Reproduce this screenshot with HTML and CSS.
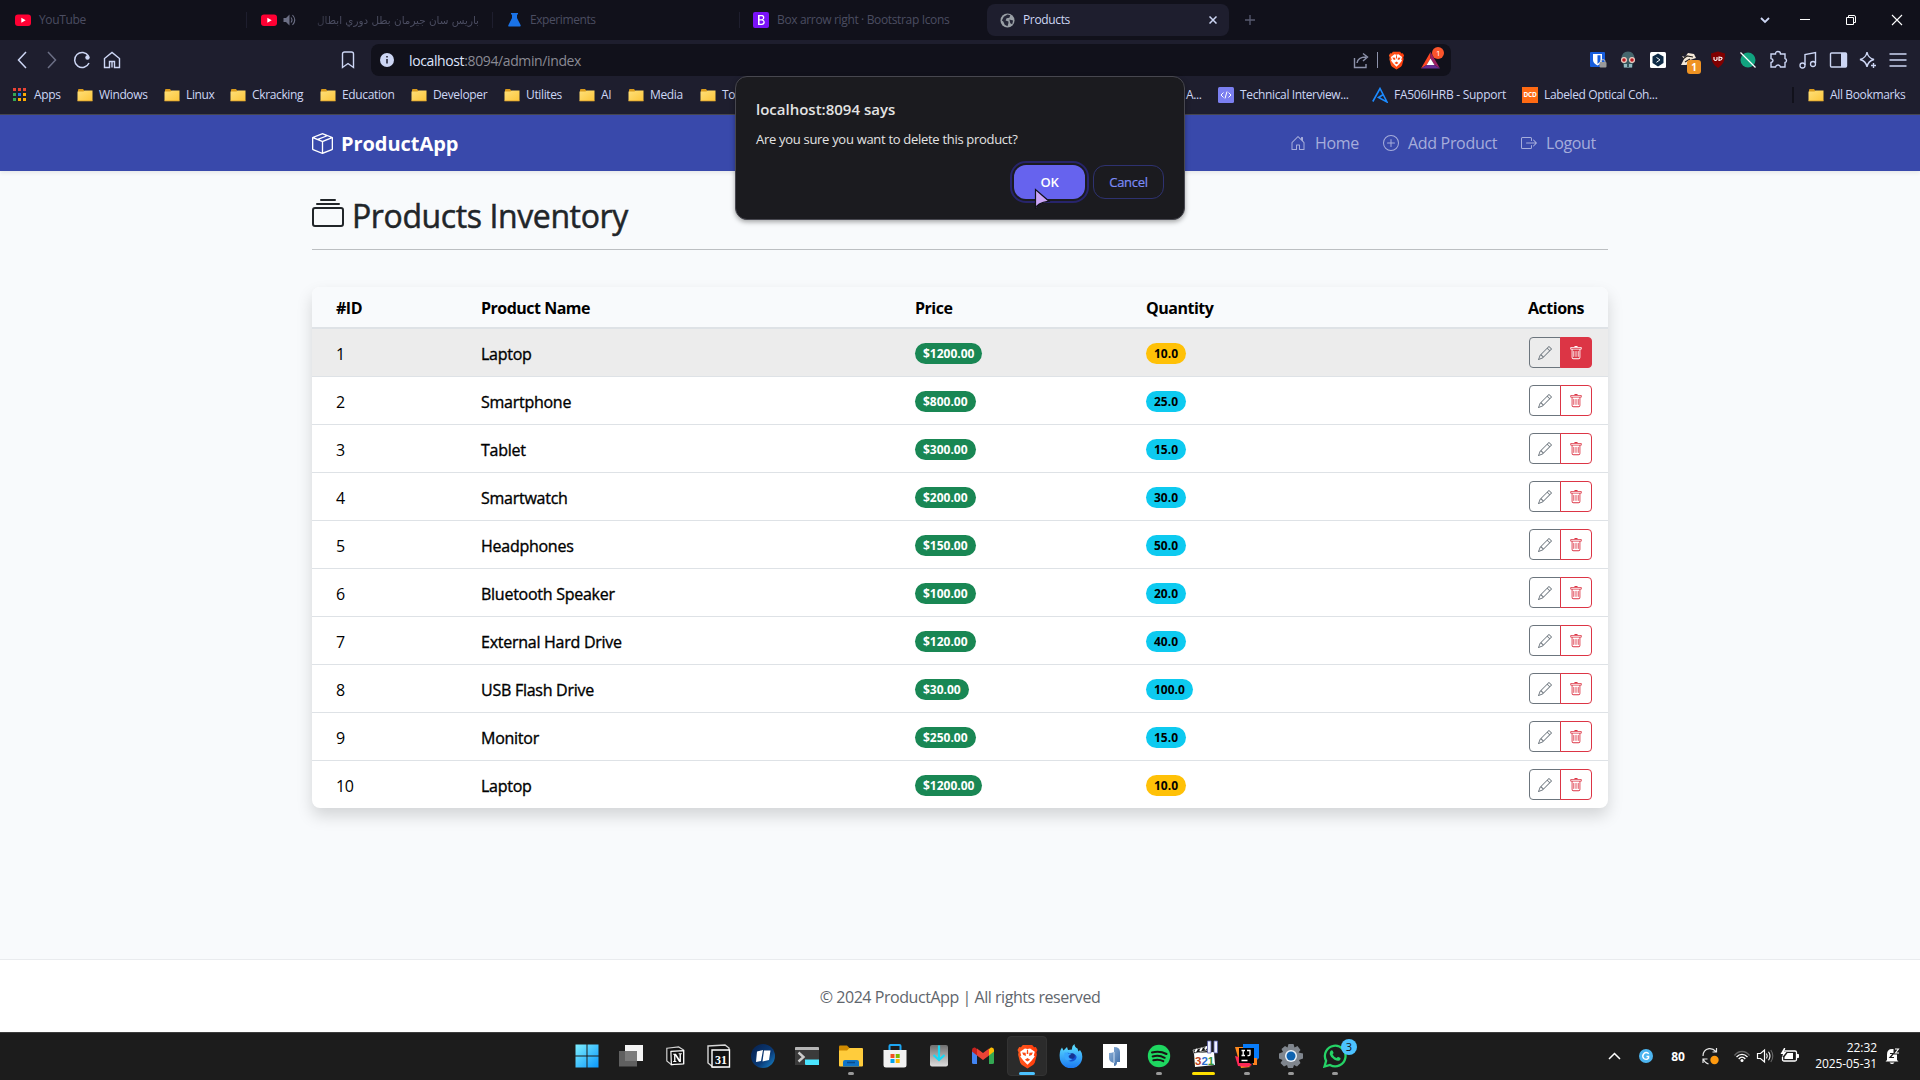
FILE: index.html
```html
<!DOCTYPE html>
<html lang="en">
<head>
<meta charset="utf-8">
<title>Products</title>
<link rel="stylesheet" href="styles.css">
</head>
<body>
<svg class="defs" width="0" height="0">
  <defs>
    <linearGradient id="gFolder" x1="0" y1="0" x2="1" y2="1"><stop offset="0" stop-color="#ffe07a"/><stop offset="1" stop-color="#fcc63a"/></linearGradient>
    <linearGradient id="gWin" x1="0" y1="0" x2="1" y2="1"><stop offset="0" stop-color="#7eefff"/><stop offset="1" stop-color="#0a97fb"/></linearGradient>
    <linearGradient id="gBrave" x1="0" y1="0" x2="1" y2="0"><stop offset="0" stop-color="#ff5a1f"/><stop offset="1" stop-color="#ff3a0a"/></linearGradient>
    <linearGradient id="gFox" x1="0" y1="0" x2="0" y2="1"><stop offset="0" stop-color="#5fe3ff"/><stop offset="1" stop-color="#1a78f2"/></linearGradient>
    <linearGradient id="gGray" x1="0" y1="0" x2="0" y2="1"><stop offset="0" stop-color="#707070"/><stop offset="1" stop-color="#dedede"/></linearGradient>
    <linearGradient id="gPhys" x1="0" y1="0" x2="1" y2="1"><stop offset="0" stop-color="#90b4dc"/><stop offset="1" stop-color="#3c6ba5"/></linearGradient>
    <linearGradient id="gOrb" x1="0" y1="0" x2="1" y2="1"><stop offset="0" stop-color="#07204c"/><stop offset=".6" stop-color="#0a3b78"/><stop offset="1" stop-color="#1a8bd0"/></linearGradient>
    <symbol id="folder" viewBox="0 0 16 16"><path d="M1 3a1 1 0 0 1 1-1h4l1.500 2H15v9H1z" fill="#d99a1c"/><path d="M.5 4.500h6L7.500 3.500H15.500V14H.5z" fill="url(#gFolder)"/><path d="M.5 13.500h15v.8H.5z" fill="#e0a32a"/></symbol>
    <symbol id="youtube" viewBox="0 0 16 16"><rect y="2.500" width="16" height="11.500" rx="3" fill="#ff0033"/><path d="M6.300 5.700v5l4.400-2.500z" fill="#fff"/></symbol>
    <symbol id="pencil" viewBox="0 0 16 16"><path d="M12.146.146a.5.5 0 0 1 .708 0l3 3a.5.5 0 0 1 0 .708l-10 10a.5.5 0 0 1-.168.11l-5 2a.5.5 0 0 1-.65-.65l2-5a.5.5 0 0 1 .11-.168zM11.207 2.5 13.500 4.793 14.793 3.500 12.500 1.207zm1.586 3L10.500 3.207 4 9.707V10h.5a.5.5 0 0 1 .5.5v.5h.5a.5.5 0 0 1 .5.5v.5h.293zm-9.761 5.175-.106.106-1.528 3.821 3.821-1.528.106-.106A.5.5 0 0 1 5 12.500V12h-.5a.5.5 0 0 1-.5-.5V11h-.5a.5.5 0 0 1-.468-.325"/></symbol>
    <symbol id="trash" viewBox="0 0 16 16"><path d="M5.500 5.500A.5.5 0 0 1 6 6v6a.5.5 0 0 1-1 0V6a.5.5 0 0 1 .5-.5m2.500 0a.5.5 0 0 1 .5.5v6a.5.5 0 0 1-1 0V6a.5.5 0 0 1 .5-.5m3 .5a.5.5 0 0 0-1 0v6a.5.5 0 0 0 1 0z"/><path d="M14.500 3a1 1 0 0 1-1 1H13v9a2 2 0 0 1-2 2H5a2 2 0 0 1-2-2V4h-.5a1 1 0 0 1-1-1V2a1 1 0 0 1 1-1H6a1 1 0 0 1 1-1h2a1 1 0 0 1 1 1h3.500a1 1 0 0 1 1 1zM4.118 4 4 4.059V13a1 1 0 0 0 1 1h6a1 1 0 0 0 1-1V4.059L11.882 4zM2.500 3h11V2h-11z"/></symbol>
    <symbol id="brave" viewBox="0 0 20 24"><path d="M5.500 1h9l1.800 2 1.700-.2 1.600 3-1 2 .4 2.500-2 7.700-1.400 2L10 23.500 4.400 20 3 18 1 10.300l.4-2.500-1-2 1.600-3 1.700.2z" fill="url(#gBrave)"/><path d="M10 4.800l2.500-.6L17 7.500l-1 3.500 1 1-3.200 4L10 19.800 6.200 16 3 12l1-1-1-3.500 4.500-3.300z" fill="#fff"/><path d="M4.800 8.200l3.400.3.300 3L6 10.600zM15.200 8.200l-3.400.3-.3 3 2.500-.9zM7.500 15l2.500-1.600 2.500 1.600L10 16.800zM9.500 5.500h1l.3 4h-1.600z" fill="#fb4a14"/></symbol>
  </defs>
</svg>

<header class="browser">
  <div class="tabs">
    <div class="tab"><svg width="16" height="16"><use href="#youtube"/></svg><span>YouTube</span></div>
    <div class="tab tab-audio"><svg width="16" height="16"><use href="#youtube"/></svg><svg class="speaker" width="13" height="14" viewBox="0 0 13 14"><path d="M.5 5h2.500l3.500-3.500v11L3 9H.5z" fill="#6c6f85"/><path d="M8 4.500q2 2.500 0 5M9.500 2q4.500 5 0 10" fill="none" stroke="#6c6f85" stroke-width="1.100"/></svg><span class="arabic" dir="rtl" lang="ar">باريس سان جيرمان بطل دوري ابطال</span></div>
    <div class="tab tab-flask"><svg width="13" height="14" viewBox="0 0 13 14"><path d="M3 0h7v1.500H9V5l3.700 7.200q.3 1.300-1 1.300H1.300q-1.300 0-1-1.300L4 5V1.500H3z" fill="#1a73e8"/></svg><span>Experiments</span></div>
    <div class="tab"><svg width="16" height="16" viewBox="0 0 16 16"><rect width="16" height="16" rx="2" fill="#7a12f8"/><path d="M5 3h3.700c3.300 0 3.300 4 1 4.700 3 .6 2.800 5.300-1 5.300H5zm1.600 1.300v2.900h1.900c2 0 2-2.900 0-2.900zm0 4.200v3.200h2.100c2.300 0 2.300-3.200 0-3.200z" fill="#fff"/></svg><span>Box arrow right · Bootstrap Icons</span></div>
    <div class="tab active"><svg width="15" height="15" viewBox="0 0 16 16"><circle cx="8" cy="8" r="7.500" fill="#9aa0a6"/><path d="M8 1.500l3 1-1 2.500-3 .5L6 8l3 1v2l-1 3-3-1.500L3.500 9 2 8l2-4zM10 7l4 1-1 4-2-1z" fill="#262738"/></svg><span>Products</span><svg class="close" width="8" height="8" viewBox="0 0 8 8"><path d="M.5.5l7 7M7.500.5l-7 7" stroke="#cdd6f4" stroke-width="1.500"/></svg></div>
    <svg class="newtab" width="10" height="10" viewBox="0 0 10 10"><path d="M5 0v10M0 5h10" stroke="#585b70" stroke-width="1.300"/></svg>
    <div class="wincontrols">
      <svg class="w-chev" width="10" height="7" viewBox="0 0 10 7"><path d="M1 1l4 4 4-4" fill="none" stroke="#cdd6f4" stroke-width="1.800"/></svg>
      <svg width="46" height="12" viewBox="0 0 46 12"><path d="M18 5.500h10" stroke="#fff"/></svg>
      <svg width="46" height="12" viewBox="0 0 46 12"><path d="M18.500 3.500h7v7h-7zM20.500 3V1.500h5.500q1.500 0 1.500 1.500v5.500H26" fill="none" stroke="#fff"/></svg>
      <svg width="46" height="12" viewBox="0 0 46 12"><path d="M18 1l10 10M28 1L18 11" stroke="#fff" stroke-width="1.100"/></svg>
    </div>
  </div>

  <div class="toolbar">
    <div class="navbtns">
      <svg viewBox="0 0 30 20"><path d="M20 2l-7.500 8 7.500 8" fill="none" stroke="#cdd6f4" stroke-width="1.500"/></svg>
      <svg viewBox="0 0 30 20"><path d="M12 2l7.500 8-7.500 8" fill="none" stroke="#6c6f85" stroke-width="1.500"/></svg>
      <svg viewBox="0 0 30 20"><path d="M22.500 6a7.500 7.500 0 1 0 .5 7" fill="none" stroke="#cdd6f4" stroke-width="1.500"/><circle cx="21.500" cy="7.500" r="2.200" fill="#cdd6f4"/></svg>
      <svg viewBox="0 0 30 20"><path d="M8.500 17.500v-9L16 2.500l7.500 6v9h-5v-6h-5v6zM16 12v5.500" fill="none" stroke="#cdd6f4" stroke-width="1.400"/></svg>
    </div>
    <svg class="bm" width="14" height="18" viewBox="0 0 14 18"><path d="M1.500 3a2 2 0 0 1 2-2h7a2 2 0 0 1 2 2v13.500L7 12.500l-5.500 4z" fill="none" stroke="#cdd6f4" stroke-width="1.400"/></svg>
    <div class="urlbar">
      <svg width="14" height="14" viewBox="0 0 14 14"><circle cx="7" cy="7" r="7" fill="#cdd6f4"/><path d="M7 6v4.500M7 3v1.600" stroke="#313244" stroke-width="1.700"/></svg>
      <span class="url"><b>localhost</b>:8094/admin/index</span>
      <svg class="share" width="17" height="17" viewBox="0 0 17 17"><path d="M1.500 6v9.500h11.500V12M4 11q1-6 9-6M10 1.500L14.500 5 10 9" fill="none" stroke="#8d92ab" stroke-width="1.400"/></svg>
      <i class="vline"></i>
      <svg class="shield" width="17" height="19"><use href="#brave"/></svg>
      <span class="bat"><svg width="19" height="17" viewBox="0 0 19 17"><path d="M9.500 0L0 16.500l5.500-3.500 4-6.500z" fill="#ff4724"/><path d="M9.500 0L19 16.500 13.500 13 9.500 6.500z" fill="#9e1f63"/><path d="M0 16.500h19L13.500 13h-8z" fill="#662d91"/><path d="M9.500 6.500l4 6.500h-8z" fill="#fff"/></svg><em>1</em></span>
    </div>
    <div class="exts">
      <svg viewBox="0 0 30 20"><rect x="7" y="2" width="15" height="15" rx="1" fill="#175ddc"/><path d="M10 4h9v6q0 3-4.500 5.500Q10 13 10 10z" fill="#fff"/><path d="M14.500 5.300H17.500V10q0 2-3 4z" fill="#175ddc"/><rect x="16.500" y="12" width="7" height="5.500" rx="1" fill="#9a9a9a"/><path d="M18 12v-1.500q2-2 4 0V12" fill="none" stroke="#bbb"/></svg>
      <svg viewBox="0 0 30 20"><path d="M8.500 9q0-7.500 6.500-7.500t6.500 7.500v3h-13z" fill="#45666c"/><path d="M9.500 11h11l-1 6.500h-9z" fill="#37565c"/><path d="M11 14h8v3.500h-8z" fill="#93b7bf"/><path d="M15 12v5" stroke="#37565c" stroke-width="2"/><circle cx="11" cy="10" r="3" fill="#efd0c4"/><circle cx="19" cy="10" r="3" fill="#efd0c4"/><circle cx="11" cy="10" r="1.800" fill="#b91d23"/><circle cx="19" cy="10" r="1.800" fill="#b91d23"/></svg>
      <svg viewBox="0 0 30 20"><rect x="7" y="2" width="16" height="16" rx="1.500" fill="#fff"/><path d="M15 3.500l5.500 3v6.500L15 16.500 9.500 13V6.500z" fill="#0f2b46"/><path d="M13.500 7.500l3.500 2.300-3.500 2.500" fill="none" stroke="#fff"/></svg>
      <span class="extbadge"><svg viewBox="0 0 30 20"><path d="M8 15l3-6-2-3 3 1 3-4 6 1 2 4-6 2-1 4-3 1z" fill="#f4e8d8"/><path d="M10 9l4-3 6 1M12 12l5-3M8 5l3-2" fill="none" stroke="#25211f" stroke-width="1.200"/></svg><em>1</em></span>
      <svg viewBox="0 0 30 20"><path d="M15 1.500l7 2q.5 10-7 14.500-7.500-4.500-7-14.500z" fill="#800000"/><path d="M11 7v2.500q1.500 2 3 0V7M16 7q3.500 0 3 1.700t-3 1.800z" fill="none" stroke="#fff" stroke-width="1.100"/></svg>
      <svg viewBox="0 0 30 20"><circle cx="15" cy="10" r="7.500" fill="#11a37f"/><path d="M7.500 2.500l15 15" stroke="#fff" stroke-width="1.300"/></svg>
      <svg viewBox="0 0 30 20"><path d="M8 4h4.500q0-2.500 2.500-2.500T17.500 4H22v4.500q1.500.3 1.500 2T22 12.500V17h-4.500q-.5-2-2.500-2t-2.500 2H8v-4.500q2-.5 2-2T8 8.500z" fill="none" stroke="#cdd6f4" stroke-width="1.400"/></svg>
      <svg viewBox="0 0 30 20"><path d="M12 15V4.500l10.500-2V13" fill="none" stroke="#cdd6f4" stroke-width="1.400"/><circle cx="9.500" cy="15.500" r="2.500" fill="none" stroke="#cdd6f4" stroke-width="1.300"/><circle cx="20" cy="14" r="2.500" fill="none" stroke="#cdd6f4" stroke-width="1.300"/></svg>
      <svg viewBox="0 0 30 20"><rect x="7.500" y="3" width="16" height="14" rx="1" fill="none" stroke="#cdd6f4" stroke-width="1.400"/><path d="M18 3h5v14h-5z" fill="#cdd6f4"/></svg>
      <svg viewBox="0 0 30 20"><path d="M14 2q1 6 7 7.500-6 1.500-7 7.500-1-6-7-7.500Q13 8 14 2zM20.500 13v5M18 15.500h5" fill="none" stroke="#cdd6f4" stroke-width="1.400"/></svg>
      <svg viewBox="0 0 30 20"><path d="M6.500 4h17M6.500 10h17M6.500 16h17" stroke="#cdd6f4" stroke-width="1.500"/></svg>
    </div>
  </div>

  <div class="bookmarks">
    <div class="mark"><svg class="apps" width="13" height="13" viewBox="0 0 13 13"><path d="M0 0h3v3H0zM5 0h3v3H5zM10 0h3v3h-3z" fill="#ea4335"/><path d="M0 5h3v3H0zM0 10h3v3H0z" fill="#34a853"/><path d="M5 5h3v3H5z" fill="#1a73e8"/><path d="M10 5h3v3h-3zM5 10h3v3H5zM10 10h3v3h-3z" fill="#fbab05"/></svg>Apps</div>
    <div class="mark"><svg width="16" height="16"><use href="#folder"/></svg>Windows</div>
    <div class="mark"><svg width="16" height="16"><use href="#folder"/></svg>Linux</div>
    <div class="mark"><svg width="16" height="16"><use href="#folder"/></svg>Ckracking</div>
    <div class="mark"><svg width="16" height="16"><use href="#folder"/></svg>Education</div>
    <div class="mark"><svg width="16" height="16"><use href="#folder"/></svg>Developer</div>
    <div class="mark"><svg width="16" height="16"><use href="#folder"/></svg>Utilites</div>
    <div class="mark"><svg width="16" height="16"><use href="#folder"/></svg>AI</div>
    <div class="mark"><svg width="16" height="16"><use href="#folder"/></svg>Media</div>
    <div class="mark"><svg width="16" height="16"><use href="#folder"/></svg>To</div>
    <div class="mark">A...</div>
    <div class="mark"><svg width="16" height="16" viewBox="0 0 16 16"><rect width="16" height="16" rx="1.500" fill="#7b7ff0"/><path d="M5.500 5.500L3 8l2.500 2.500M10.500 5.500L13 8l-2.500 2.500M9 4.500l-2 7" fill="none" stroke="#fff"/></svg>Technical Interview...</div>
    <div class="mark"><svg width="16" height="16" viewBox="0 0 16 16"><path d="M.8 14.500L8 1.500l7 13.500-8.500-4.500L10.500 8" fill="none" stroke="#1c8bff" stroke-width="1.600"/></svg><span class="asus">FA506IHRB - Support</span></div>
    <div class="mark"><i class="dcd">DCD</i>Labeled Optical Coh...</div>
    <div class="mark all"><svg width="16" height="16"><use href="#folder"/></svg>All Bookmarks</div>
  </div>
</header>

<main class="page">
  <nav class="navbar">
    <div class="container">
      <a class="brand"><svg width="21" height="21" viewBox="0 0 16 16" fill="currentColor"><path d="M8.186 1.113a.5.5 0 0 0-.372 0L1.846 3.500l2.404.961L10.404 2zm3.564 1.426L5.596 5 8 5.961 14.154 3.500zm3.250 1.700-6.500 2.600v7.922l6.500-2.600V4.240zM7.500 14.762V6.838L1 4.239v7.923zM7.443.184a1.500 1.500 0 0 1 1.114 0l7.129 2.852A.5.5 0 0 1 16 3.500v8.662a1 1 0 0 1-.629.928l-7.185 2.874a.5.5 0 0 1-.372 0L.63 13.090a1 1 0 0 1-.63-.928V3.500a.5.5 0 0 1 .314-.464z"/></svg><span>ProductApp</span></a>
      <div class="links">
        <a><svg width="16" height="16" viewBox="0 0 16 16" fill="currentColor"><path d="M8.354 1.146a.5.5 0 0 0-.708 0l-6 6A.5.5 0 0 0 1.500 7.500v7a.5.5 0 0 0 .5.5h4.500a.5.5 0 0 0 .5-.5v-4h2v4a.5.5 0 0 0 .5.5H14a.5.5 0 0 0 .5-.5v-7a.5.5 0 0 0-.146-.354L13 5.793V2.500a.5.5 0 0 0-.5-.5h-1a.5.5 0 0 0-.5.5v1.293zM2.500 14V7.707l5.500-5.500 5.500 5.500V14H10v-4a.5.5 0 0 0-.5-.5h-3a.5.5 0 0 0-.5.5v4z"/></svg><span>Home</span></a>
        <a><svg width="16" height="16" viewBox="0 0 16 16" fill="currentColor"><path d="M8 15A7 7 0 1 1 8 1a7 7 0 0 1 0 14m0 1A8 8 0 1 0 8 0a8 8 0 0 0 0 16"/><path d="M8 4a.5.5 0 0 1 .5.5v3h3a.5.5 0 0 1 0 1h-3v3a.5.5 0 0 1-1 0v-3h-3a.5.5 0 0 1 0-1h3v-3A.5.5 0 0 1 8 4"/></svg><span>Add Product</span></a>
        <a><svg width="16" height="16" viewBox="0 0 16 16" fill="currentColor"><path d="M10 12.500a.5.5 0 0 1-.5.5h-8a.5.5 0 0 1-.5-.5v-9a.5.5 0 0 1 .5-.5h8a.5.5 0 0 1 .5.5v2a.5.5 0 0 0 1 0v-2A1.500 1.500 0 0 0 9.500 2h-8A1.500 1.500 0 0 0 0 3.500v9A1.500 1.500 0 0 0 1.500 14h8a1.500 1.500 0 0 0 1.500-1.500v-2a.5.5 0 0 0-1 0z"/><path d="M15.854 8.354a.5.5 0 0 0 0-.708l-3-3a.5.5 0 0 0-.708.708L14.293 7.500H5.500a.5.5 0 0 0 0 1h8.793l-2.147 2.146a.5.5 0 0 0 .708.708z"/></svg><span>Logout</span></a>
      </div>
    </div>
  </nav>

  <section class="content">
    <h2><svg width="32" height="32" viewBox="0 0 16 16" fill="currentColor"><path d="M2.500 3.500a.5.5 0 0 1 0-1h11a.5.5 0 0 1 0 1zm2-2a.5.5 0 0 1 0-1h7a.5.5 0 0 1 0 1zM0 13a1.500 1.500 0 0 0 1.500 1.500h13A1.500 1.500 0 0 0 16 13V6a1.500 1.500 0 0 0-1.500-1.500h-13A1.500 1.500 0 0 0 0 6zm1.500.5A.5.5 0 0 1 1 13V6a.5.5 0 0 1 .5-.5h13a.5.5 0 0 1 .5.5v7a.5.5 0 0 1-.5.5z"/></svg><span>Products Inventory</span></h2>
    <hr>
    <div class="card">
      <table>
        <colgroup><col class="c-id"><col class="c-name"><col class="c-price"><col class="c-qty"><col></colgroup>
        <thead><tr><th>#ID</th><th>Product Name</th><th>Price</th><th>Quantity</th><th class="act">Actions</th></tr></thead>
        <tbody>
          <tr class="hover"><td>1</td><td class="name">Laptop</td><td><span class="badge green">$1200.00</span></td><td><span class="badge yellow">10.0</span></td><td class="act"><div class="group"><a class="edit"><svg width="14" height="14"><use href="#pencil"/></svg></a><a class="del on"><svg width="14" height="14"><use href="#trash"/></svg></a></div></td></tr>
          <tr><td>2</td><td class="name">Smartphone</td><td><span class="badge green">$800.00</span></td><td><span class="badge cyan">25.0</span></td><td class="act"><div class="group"><a class="edit"><svg width="14" height="14"><use href="#pencil"/></svg></a><a class="del"><svg width="14" height="14"><use href="#trash"/></svg></a></div></td></tr>
          <tr><td>3</td><td class="name">Tablet</td><td><span class="badge green">$300.00</span></td><td><span class="badge cyan">15.0</span></td><td class="act"><div class="group"><a class="edit"><svg width="14" height="14"><use href="#pencil"/></svg></a><a class="del"><svg width="14" height="14"><use href="#trash"/></svg></a></div></td></tr>
          <tr><td>4</td><td class="name">Smartwatch</td><td><span class="badge green">$200.00</span></td><td><span class="badge cyan">30.0</span></td><td class="act"><div class="group"><a class="edit"><svg width="14" height="14"><use href="#pencil"/></svg></a><a class="del"><svg width="14" height="14"><use href="#trash"/></svg></a></div></td></tr>
          <tr><td>5</td><td class="name">Headphones</td><td><span class="badge green">$150.00</span></td><td><span class="badge cyan">50.0</span></td><td class="act"><div class="group"><a class="edit"><svg width="14" height="14"><use href="#pencil"/></svg></a><a class="del"><svg width="14" height="14"><use href="#trash"/></svg></a></div></td></tr>
          <tr><td>6</td><td class="name">Bluetooth Speaker</td><td><span class="badge green">$100.00</span></td><td><span class="badge cyan">20.0</span></td><td class="act"><div class="group"><a class="edit"><svg width="14" height="14"><use href="#pencil"/></svg></a><a class="del"><svg width="14" height="14"><use href="#trash"/></svg></a></div></td></tr>
          <tr><td>7</td><td class="name">External Hard Drive</td><td><span class="badge green">$120.00</span></td><td><span class="badge cyan">40.0</span></td><td class="act"><div class="group"><a class="edit"><svg width="14" height="14"><use href="#pencil"/></svg></a><a class="del"><svg width="14" height="14"><use href="#trash"/></svg></a></div></td></tr>
          <tr><td>8</td><td class="name">USB Flash Drive</td><td><span class="badge green">$30.00</span></td><td><span class="badge cyan">100.0</span></td><td class="act"><div class="group"><a class="edit"><svg width="14" height="14"><use href="#pencil"/></svg></a><a class="del"><svg width="14" height="14"><use href="#trash"/></svg></a></div></td></tr>
          <tr><td>9</td><td class="name">Monitor</td><td><span class="badge green">$250.00</span></td><td><span class="badge cyan">15.0</span></td><td class="act"><div class="group"><a class="edit"><svg width="14" height="14"><use href="#pencil"/></svg></a><a class="del"><svg width="14" height="14"><use href="#trash"/></svg></a></div></td></tr>
          <tr><td>10</td><td class="name">Laptop</td><td><span class="badge green">$1200.00</span></td><td><span class="badge yellow">10.0</span></td><td class="act"><div class="group"><a class="edit"><svg width="14" height="14"><use href="#pencil"/></svg></a><a class="del"><svg width="14" height="14"><use href="#trash"/></svg></a></div></td></tr>
        </tbody>
      </table>
    </div>
  </section>
  <footer>© 2024 ProductApp | All rights reserved</footer>
</main>

<div class="dialog">
  <div class="d-title">localhost:8094 says</div>
  <div class="d-text">Are you sure you want to delete this product?</div>
  <div class="d-buttons"><span class="ok">OK</span><span class="cancel">Cancel</span></div>
</div>
<svg class="cursor" width="17" height="23" viewBox="0 0 17 23"><path d="M1.500 1.500v19.500q1-6 13.500-7.800z" fill="#cba6f7" stroke="#11111b" stroke-width="1.200"/></svg>

<div class="taskbar">
  <div class="apps-row">
    <span class="app"><svg width="24" height="24" viewBox="0 0 24 24"><path d="M.5.500h11v11H.5zM12.500.5h11v11h-11zM.5 12.500h11v11H.5zM12.500 12.500h11v11h-11z" fill="url(#gWin)"/></svg></span>
    <span class="app"><svg width="24" height="24" viewBox="0 0 24 24"><path d="M6 1h18v16H6z" fill="#f4f4f4"/><path d="M0 7h18v15.500H0z" fill="#6a6a6a" opacity=".88"/></svg></span>
    <span class="app"><svg width="20" height="20" viewBox="1 1 22 22"><path d="M3 3.500l13-1.500 5.500 3.500v15L8 21.500l-5-4z" fill="#111" stroke="#d5d5d5" stroke-width="1.300"/><path d="M7.500 7l14-1v14.500L8 21.500z" fill="#111" stroke="#fff" stroke-width="1.300"/><path d="M10 9.500h3l4 6V10h-1V9h3.500v1h-1v8.500h-2l-4-6.500v5.500h1v1H10v-1h1v-7h-1z" fill="#fff"/></svg></span>
    <span class="app"><svg width="24" height="24" viewBox="0 0 24 24"><path d="M1 2l17-1 4 3v18L6 23l-5-4z" fill="#111" stroke="#d5d5d5" stroke-width="1.400"/><path d="M5 6h17.500v17H5z" fill="#111" stroke="#fff" stroke-width="1.400"/><text x="13.900" y="19.500" class="cal">31</text></svg></span>
    <span class="app"><svg width="24" height="24" viewBox="0 0 24 24"><circle cx="12" cy="12" r="12" fill="url(#gOrb)"/><path d="M6 7.500l6-1.500-2 11-5 1zM13 6.500h6.500L18 16l-6.500 1.500z" fill="#fff"/></svg></span>
    <span class="app"><svg width="24" height="24" viewBox="0 0 24 24"><path d="M0 4q0-1 1-1h22q1 0 1 1v17H0z" fill="#3b3b3b"/><path d="M0 4q0-1 1-1h22q1 0 1 1v2H0z" fill="#b5b5b5"/><path d="M3.500 8.500l5 4.500-5 4.500" fill="none" stroke="#ccc" stroke-width="2.400"/><path d="M10 15.500h14V21H11q-1 0-1-1z" fill="#4be5ff"/></svg></span>
    <span class="app"><svg width="24" height="24" viewBox="0 0 24 24"><path d="M0 2.500q0-1 1-1h7l2.500 2.500V7H0z" fill="#d08a00"/><path d="M0 6.500h8L10.500 4H23q1 0 1 1v16.500q0 1-1 1H1q-1 0-1-1z" fill="#ffcc3c"/><path d="M4 22.500V18q0-2 2-2h12q2 0 2 2v4.500z" fill="#0f74c7"/><path d="M8 18.500h8" stroke="#0a4b8a" stroke-width="1.500"/></svg><i class="dot"></i></span>
    <span class="app"><svg width="24" height="24" viewBox="0 0 24 24"><path d="M6.500 8V2q0-1 1-1h9q1 0 1 1v6" fill="none" stroke="#1da6f2" stroke-width="2"/><path d="M.5 6h23v15q0 2.500-2.500 2.500H3Q.5 23.500.5 21z" fill="#f2f2f2"/><path d="M7.500 10h4v4h-4z" fill="#f25022"/><path d="M12.700 10h4v4h-4z" fill="#7fba00"/><path d="M7.500 15h4v4h-4z" fill="#00a4ef"/><path d="M12.700 15h4v4h-4z" fill="#ffb900"/></svg></span>
    <span class="app"><svg width="24" height="24" viewBox="0 0 24 24"><rect x="3" y="1" width="18" height="21.500" rx="2" fill="url(#gGray)"/><path d="M12 1.500v14M6.500 11l5.500 5 5.500-5" fill="none" stroke="#16d8f5" stroke-width="2.200"/></svg></span>
    <span class="app"><svg width="24" height="24" viewBox="0 0 24 24"><path d="M1 6v12.500q0 1.500 1.500 1.500H6V9.500z" fill="#4285f4"/><path d="M18 9.500V20h3.500q1.500 0 1.500-1.500V6z" fill="#34a853"/><path d="M6 4.500v7l6 4.500 6-4.500v-7L12 9z" fill="#ea4335"/><path d="M1 6q0-3 3-2.500l2 1.500v6.500L1 7.500z" fill="#c5221f"/><path d="M23 6q0-3-3-2.500L18 5v6.500l5-4z" fill="#fbbc04"/></svg></span>
    <span class="app current"><svg width="21" height="25"><use href="#brave"/></svg><i class="bar blue"></i></span>
    <span class="app"><svg width="24" height="24" viewBox="0 0 24 24"><path d="M1.500 6L3 3.500l1.500 3L8 3l1 3 4-.5Q12.500 2 15.500 0q0 3 3 4.500l1 3L21 6q2.500 3 2.300 7A11.300 11.300 0 0 1 .7 13Q.3 9 1.500 6z" fill="url(#gFox)"/><path d="M7 9.500q2-1.500 3.500 0l3.500.3q4 1 3.500 4-1.500 4-6 3.700-5-1-4.500-8z" fill="#1450d0"/><circle cx="13" cy="12" r="2.800" fill="#16338f"/><path d="M5.500 8.500q2.500-.5 4 1l3 .2-3 2.300q0 3 4 3-4 3-7 .5-2-3-1-7z" fill="#3aa8ff"/></svg></span>
    <span class="app"><svg width="24" height="24" viewBox="0 0 24 24"><path d="M0 0h24v24H0z" fill="#fff"/><path d="M11 3q6 0 6 5v10h-3q0 4-3 4v-3q-5-1-5-5V9q3 0 5-1z" fill="url(#gPhys)"/><path d="M11 8v11" stroke="#cfe0f2"/></svg></span>
    <span class="app"><svg width="24" height="24" viewBox="0 0 24 24"><circle cx="12" cy="12" r="11.200" fill="#1ed760"/><path d="M5 8.500q7.500-2.300 14.500 1.500M5.700 12.500q6.500-1.800 12 1.300M6.300 16.200q5.500-1.500 10 1" fill="none" stroke="#191414" stroke-width="2" stroke-linecap="round"/></svg><i class="dot"></i></span>
    <span class="app player"><svg width="26" height="28" viewBox="0 0 26 28"><path d="M2 13l20-1 1 13-20 2z" fill="#fff"/><path d="M1 10l16-4v4L2 13.500z" fill="#111" stroke="#eee" stroke-width=".6"/><path d="M3 12l2-3M8 11l2-3M13 9.500l2-3" stroke="#fff" stroke-width="2"/><text x="3" y="24.500" class="mpc"><tspan fill="#c0431a">3</tspan><tspan fill="#2b6fd0">2</tspan><tspan fill="#3a9a38">1</tspan></text><path d="M15.500 1h3.500v12h-3.500zM22 1h3.500v12H22z" fill="#eef0ff" stroke="#5a60a8" stroke-width=".8"/></svg><i class="bar yellowbar"></i></span>
    <span class="app"><svg width="24" height="24" viewBox="0 0 24 24"><path d="M0 3l9 0-1 17 8 3-10 1z" fill="#ff8a1f"/><path d="M0 12l8 2 9 7-5 2-9-1z" fill="#fe2857"/><path d="M8 0h16v14l-6 6L8 8z" fill="#087cfa"/><path d="M18 14h4v7h-4z" fill="#fc801d"/><path d="M4 4h15v15H4z" fill="#000"/><path d="M6.500 6.500h3.500M8.200 6.500v5M6.500 11.500h3.500M12 6.500h3v4q0 1.200-2.500 1M6.500 16.500h6" fill="none" stroke="#fff" stroke-width="1.300"/></svg><i class="dot"></i></span>
    <span class="app"><svg width="24" height="24" viewBox="0 0 24 24"><path d="M9.500 0h5l1 3.500 3-1.500 3 4-2 2.500 4.500 1v5l-4 1.500 1.500 3-3.500 3.500-3-1.500-1 3h-5l-1-3-3 1.500L1.500 19 3.500 16 0 14.500v-5l4-1.500-1.500-3L6 2l2.500 1.500z" fill="#80868e"/><circle cx="12" cy="12" r="6" fill="#eaf2fa"/><circle cx="12" cy="12" r="4.500" fill="#0f63b0"/></svg><i class="dot"></i></span>
    <span class="app"><svg width="24" height="24" viewBox="0 0 24 24"><path d="M1.500 22.500l1.600-5.700A10.300 10.300 0 1 1 7 20.900z" fill="none" stroke="#25d366" stroke-width="2.300"/><path d="M7.500 7q1.500-1.500 2.300 0l.8 2-1 1.500q1.500 2.700 4 3.500l1.400-1.300 2.500 1.300q.5 1-1 2.500-2 1-5-.8-4-2.300-4.800-5.500-.2-2 .8-3.200z" fill="#25d366"/></svg><em class="count">3</em><i class="dot"></i></span>
  </div>
  <div class="tray">
    <svg width="32" height="20" viewBox="0 0 32 20"><path d="M11 13l5.500-5.500L22 13" fill="none" stroke="#fff" stroke-width="1.500"/></svg>
    <svg width="32" height="20" viewBox="0 0 32 20"><circle cx="16" cy="10" r="7" fill="#4db5f0"/><path d="M18.800 7.700q-2.800-2.400-5 0t0 4.800q2.800 2 4.800-.5v-1.500H16.500" fill="none" stroke="#fff" stroke-width="1.400"/></svg>
    <b class="temp">80</b>
    <svg width="32" height="20" viewBox="0 0 32 20"><path d="M9 10q0-6 6-7.300 4-.5 7 3M22.500 2v4h-4M9 17v-4h4.500M9.500 13.500q2 4 5 4.300" fill="none" stroke="#e6e6e6" stroke-width="1.200"/><circle cx="20.500" cy="14" r="4.200" fill="#ff9a0f"/></svg>
    <svg class="wifi" width="22" height="20" viewBox="0 0 22 20"><path d="M3.500 9.500q3-4 7.500-4t7.500 4" fill="none" stroke="#666" stroke-width="1.300"/><path d="M5.500 11Q8 8.300 11 8.300t5.500 2.700M7.700 13q1.500-1.800 3.300-1.800t3.300 1.800" fill="none" stroke="#fff" stroke-width="1.300"/><circle cx="11" cy="14.500" r="1.500" fill="#fff"/></svg>
    <svg class="vol" width="20" height="20" viewBox="0 0 20 20"><path d="M2.500 7.500h3l4-3.500v12l-4-3.500h-3z" fill="none" stroke="#fff" stroke-width="1.200"/><path d="M11.500 7.500q1.500 2.500 0 5M13.500 5.700q3 4.300 0 8.600" fill="none" stroke="#fff" stroke-width="1.100"/><path d="M15.800 4q4 6 0 12" fill="none" stroke="#666" stroke-width="1.100"/></svg>
    <svg class="battery" width="20" height="20" viewBox="0 0 20 20"><path d="M4.500 5H15q1.500 0 1.500 1.500v7q0 1.500-1.500 1.500H4q-1.500 0-1.500-1.500V11" fill="none" stroke="#fff" stroke-width="1.300"/><path d="M17 8.500h1.500v3H17z" stroke="#fff" fill="#fff"/><path d="M7.500 7H13v6H4.500v-2zM4 2L.5 8H3l-1 3.500L6.500 6H4.300l1-4z" fill="#fff"/></svg>
    <div class="clock"><span>22:32</span><span>2025-05-31</span></div>
    <svg class="bell" width="15" height="18" viewBox="0 0 15 18"><path d="M2 13V7.500Q2 2 7 2h1.500v5.500H12V13l1.500 1.500H.5zM4.500 15.500h5q-2.500 3-5 0z" fill="#fff"/><path d="M5 6.500h3.500L5 10.500h4" fill="none" stroke="#1c1c1c" stroke-width="1.200"/><path d="M10 2h3.500L10.500 6H14" fill="none" stroke="#fff" stroke-width="1.100"/></svg>
  </div>
</div>
</body>
</html>
```
FILE: styles.css
```css
* { box-sizing: border-box; }
body {
  margin: 0;
  width: 1920px;
  height: 1080px;
  overflow: hidden;
  display: flex;
  flex-direction: column;
  position: relative;
  font-family: "Open Sans", "Noto Sans", sans-serif;
  font-size: 16px;
  background: #f8fafc;
}
svg { display: block; flex: none; }
i, em { font-style: normal; }
.defs { position: absolute; }

/* browser chrome */
.browser { height: 115px; background: #1e1e2e; border-bottom: 1px solid #47474f; color: #cdd6f4; font-size: 12px; letter-spacing: -0.35px; }
.tabs { height: 40px; background: #11111b; display: grid; grid-template-columns: 247px 246px 247px 247px 242px 42px 1fr; align-items: center; }
.tab { height: 16px; display: flex; align-items: center; gap: 8px; padding-left: 15px; border-right: 1px solid #1e1e2e; color: #4b4d61; white-space: nowrap; }
.tab span { padding-bottom: 1px; }
.tab-audio { gap: 6px; padding-left: 14px; }
.tab-flask { gap: 9px; padding-left: 15px; letter-spacing: -0.42px; }
.arabic { font-family: "DejaVu Sans", sans-serif; font-size: 10.4px; letter-spacing: 0; width: 176px; margin-left: 1px; mask-image: linear-gradient(to right, rgba(0,0,0,.15), #000 30px); }
.tab:nth-child(4) { border-right: 0; padding-left: 13px; }
.tab.active { height: 32px; background: #1e1e2e; border: 0; border-radius: 8px; padding: 0 12px 0 13px; color: #cdd6f4; }
.close { margin-left: auto; }
.newtab { margin-left: 16px; }
.wincontrols { display: flex; align-items: center; justify-content: flex-end; }
.w-chev { margin-right: 12px; }

.toolbar { height: 40px; display: flex; align-items: center; padding: 0 7px 0 6px; }
.navbtns, .exts { display: flex; }
.navbtns svg, .exts svg { width: 30px; height: 20px; }
.bm { margin-left: 215px; }
.urlbar { width: 1080px; height: 32px; margin-left: 16px; background: #11111b; border-radius: 8px; display: flex; align-items: center; padding: 0 10px 0 9px; }
.url { margin-left: 15px; font-size: 14px; letter-spacing: -0.38px; color: #8a8a94; flex: 1; }
.url b { font-weight: 400; color: #dfe5fb; }
.vline { width: 1px; height: 16px; background: #8d92ab; margin: 0 10px 0 7px; }
.bat { position: relative; margin: 0 1px 0 16px; }
.bat em { position: absolute; left: 11px; top: -5px; width: 12px; height: 12px; border-radius: 6px; background: #fb542b; color: #fff; font-size: 8px; line-height: 12px; text-align: center; }
.exts { margin-left: auto; }
.extbadge { position: relative; }
.extbadge em { position: absolute; left: 14px; top: 10px; width: 14px; height: 14px; border-radius: 3px; background: #ef9323; color: #fff; font-size: 10px; font-weight: 700; line-height: 14px; text-align: center; }

.bookmarks { display: grid; grid-template-columns: 64px 87px 66px 90px 91px 93px 75px 49px 72px 486px 32px 154px 150px 270px 1fr; padding-left: 13px; height: 29px; align-items: center; }
.mark { display: flex; align-items: center; gap: 6px; white-space: nowrap; letter-spacing: -0.36px; }
.asus { letter-spacing: -0.26px; }
.apps { margin-right: 2px; }
.dcd { width: 16px; height: 16px; background: #ff6a13; color: #fff; font-size: 6.5px; font-weight: 700; line-height: 16px; text-align: center; letter-spacing: -0.2px; }
.all { border-left: 2px solid #11111b; height: 16px; padding-left: 14px; }

/* page */
.page { height: 917px; display: flex; flex-direction: column; background: #f8fafc; color: #212529; }
.container { width: 1296px; margin: 0 auto; display: flex; align-items: center; justify-content: space-between; }
.navbar { height: 56px; background: #3949ab; display: flex; box-shadow: 0 2px 4px rgba(0,0,0,.075); }
.brand { display: flex; align-items: center; gap: 8px; color: #fff; font-size: 20px; font-weight: 700; letter-spacing: -0.05px; }
.brand span { padding-top: 1px; }
.links { display: flex; color: #a6addb; padding-right: 12px; gap: 24px; }
.links a { display: flex; align-items: center; gap: 9px; letter-spacing: -0.32px; }
.content { width: 1296px; margin: 0 auto; flex: 1; }
h2 { margin: 25px 0 0; height: 38px; display: flex; align-items: center; gap: 8px; font-size: 32px; font-weight: 500; letter-spacing: -0.4px; -webkit-text-stroke: 0.5px currentColor; }
h2 svg { margin-top: -2px; }
hr { margin: 15px 0 37px; border: 0; border-top: 1px solid #bcbfc2; }
.card { background: #fff; border-radius: 8px; overflow: hidden; box-shadow: 0 8px 16px rgba(0,0,0,.15); }
table { width: 100%; border-collapse: separate; border-spacing: 0; table-layout: fixed; color: #000; }
.c-id { width: 161px; } .c-name { width: 434px; } .c-price { width: 231px; } .c-qty { width: 230px; }
th { height: 42px; padding: 1px 8px 0; text-align: left; font-weight: 700; background: #f8fafc; border-bottom: 2px solid #dee2e6; letter-spacing: -0.5px; }
td { height: 48px; padding: 2px 8px 0; border-bottom: 1px solid #dee2e6; vertical-align: middle; letter-spacing: -0.3px; }
th:first-child, td:first-child { padding-left: 24px; }
tbody tr:last-child td { border-bottom: 0; height: 47px; }
th.act { text-align: right; padding-right: 24px; }
td.act { padding: 0 16px 0 8px; }
.name { -webkit-text-stroke: 0.35px currentColor; letter-spacing: -0.26px; }
.hover td { background: #ececec; }
.badge { display: block; width: fit-content; height: 21px; line-height: 22px; padding: 0 8px; border-radius: 11px; font-size: 12px; font-weight: 700; letter-spacing: 0; }
.green { background: #198754; color: #fff; }
.yellow { background: #ffc107; }
.cyan { background: #0dcaf0; }
.group { display: flex; justify-content: flex-end; }
.group a { width: 32px; height: 31px; border: 1px solid; display: flex; align-items: center; justify-content: center; fill: currentColor; }
.edit { color: #6c757d; border-radius: 4px 0 0 4px; }
.del { color: #dc3545; border-radius: 0 4px 4px 0; margin-left: -1px; }
.group .on { background: #dc3545; border-color: #dc3545; color: #fff; }
footer { height: 73px; padding-top: 1px; background: #fff; border-top: 1px solid #e9ebee; display: flex; align-items: center; justify-content: center; color: #5f666d; letter-spacing: -0.45px; }

/* confirm dialog */
.dialog { position: absolute; left: 735px; top: 76px; width: 450px; height: 144px; padding: 22px 20px 20px; background: #1b1b1f; border: 1px solid #47474f; border-radius: 12px; color: #e3e3e3; box-shadow: 0 2px 5px rgba(0,0,0,.35); }
.d-title { font-size: 15px; line-height: 20px; font-weight: 600; letter-spacing: 0; }
.d-text { margin-top: 10px; font-size: 13px; line-height: 20px; letter-spacing: -0.3px; }
.d-buttons { display: flex; justify-content: flex-end; gap: 8px; margin-top: 16px; font-size: 13px; font-weight: 600; }
.d-buttons span { width: 71px; height: 34px; border-radius: 12px; display: flex; align-items: center; justify-content: center; letter-spacing: -0.3px; }
.ok { background: #6663ee; color: #fff; outline: 2px solid #27246b; outline-offset: 2px; }
.cancel { border: 1px solid #2e3270; color: #7b8bf5; font-weight: 500; -webkit-text-stroke: 0.2px currentColor; }
.cursor { position: absolute; left: 1034px; top: 188px; }

/* taskbar */
.taskbar { height: 48px; background: #1c1c1c; border-top: 1px solid #3c3c3c; display: flex; align-items: center; padding: 0 0 1px 565px; color: #fff; }
.apps-row { display: flex; }
.app { width: 40px; height: 40px; margin: 0 2px; border-radius: 4px; display: flex; align-items: center; justify-content: center; position: relative; }
.current { background: #2b2b2b; border: 1px solid #333; }
.dot, .bar { position: absolute; bottom: 1px; width: 6px; height: 3px; border-radius: 2px; background: #999; }
.bar { width: 16px; background: #4cc2ff; bottom: 0; }
.yellowbar { width: 23px; background: #ffe000; bottom: 1px; }
.player svg { margin: -5px 0 0 4px; }
.count { position: absolute; right: -2px; top: 3px; width: 16px; height: 16px; border-radius: 8px; background: #4cc2ff; color: #111; font-size: 11px; line-height: 16px; text-align: center; }
.cal { font: 700 12px "Liberation Serif", serif; text-anchor: middle; fill: #fff; }
.mpc { font: 700 11.5px "Liberation Sans", sans-serif; }
.tray { margin-left: auto; display: flex; align-items: center; padding-right: 20px; }
.temp { width: 32px; text-align: center; font-size: 12px; }
.wifi { margin-left: 5px; }
.vol { margin-left: 2px; }
.battery { margin-left: 5px; }
.clock { width: 77px; display: flex; flex-direction: column; align-items: flex-end; font-size: 12px; line-height: 16px; letter-spacing: -0.08px; }
.bell { margin-left: 8px; }
```
